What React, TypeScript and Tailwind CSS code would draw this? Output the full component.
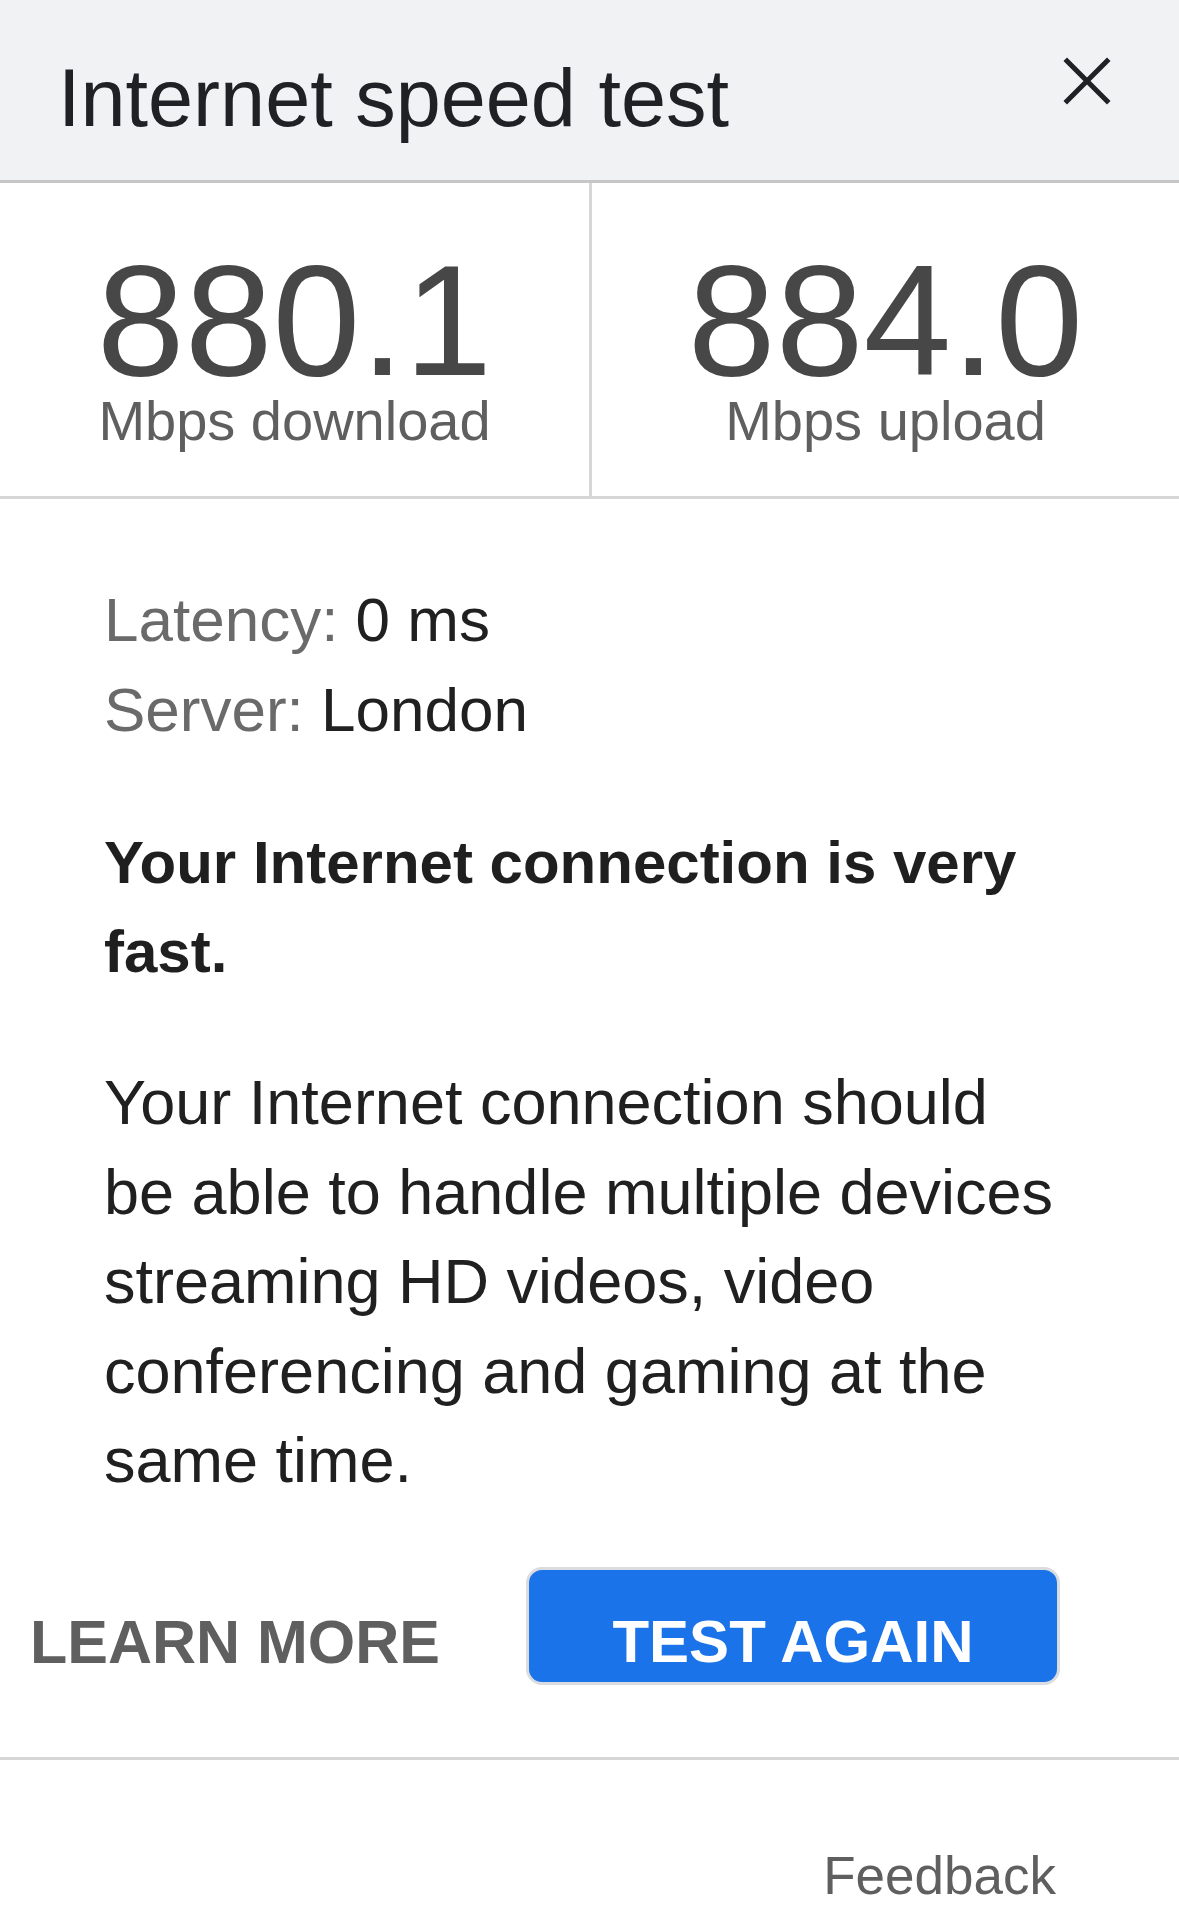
const font = { fontFamily: '"Liberation Sans", Arial, sans-serif' };

function CloseIcon() {
  return (
    <svg width="48" height="48" viewBox="0 0 48 48" className="mt-[9px] shrink-0">
      <path d="M4 4 L44 44 M44 4 L4 44" stroke="#202124" strokeWidth="5" strokeLinecap="square" />
    </svg>
  );
}

function Stat({ value, label, divider }: { value: string; label: string; divider?: boolean }) {
  return (
    <div className={`flex flex-col items-center pt-[64px] ${divider ? 'border-r-[3px] border-[#d6d6d6]' : ''}`}>
      <span className="text-[158px] leading-[146px] text-[#474747]">{value}</span>
      <span className="text-[56px] leading-[56px] text-[#5f5f5f]">{label}</span>
    </div>
  );
}

export default function App() {
  return (
    <div className="w-[1179px] min-h-[1932px] bg-white" style={font}>
      <header className="flex h-[183px] items-start justify-between border-b-[3px] border-[#c6c6c6] bg-[#f1f2f4] pt-[48px] pl-[58px] pr-[68px]">
        <h1 className="text-[81px] leading-[100px] text-[#202124]">Internet speed test</h1>
        <CloseIcon />
      </header>

      <section className="grid h-[316px] grid-cols-[592px_1fr] border-b-[3px] border-[#d6d6d6]">
        <Stat value="880.1" label="Mbps download" divider />
        <Stat value="884.0" label="Mbps upload" />
      </section>

      <section className="w-[1064px] pl-[104px] pt-[76px]">
        <div className="text-[62px] leading-[90px]">
          <p>
            <span className="text-[#6a6a6a]">Latency: </span>
            <span className="text-[#202020]">0 ms</span>
          </p>
          <p>
            <span className="text-[#6a6a6a]">Server: </span>
            <span className="text-[#202020]">London</span>
          </p>
        </div>
        <p className="mt-[63px] text-[60px] font-bold leading-[89px] text-[#1f1f1f]">
          Your Internet connection is very fast.
        </p>
        <p className="mt-[62px] text-[63px] leading-[89.5px] text-[#202020]">
          Your Internet connection should be able to handle multiple devices streaming HD videos, video
          conferencing and gaming at the same time.
        </p>
      </section>

      <div className="mt-[61px] flex items-start justify-between pl-[30px] pr-[119px]">
        <span className="mt-[45px] text-[61px] font-bold leading-[60px] text-[#5f5f5f]">LEARN MORE</span>
        <button className="flex h-[118px] w-[534px] justify-center rounded-[16px] border-[3px] border-[#dadce0] bg-[#1a73e8] pt-[42px]">
          <span className="text-[60px] font-bold leading-[60px] text-white">TEST AGAIN</span>
        </button>
      </div>

      <div className="mt-[72px] border-t-[3px] border-[#d6d6d6]" />

      <div className="flex justify-end pr-[123px] pt-[86px]">
        <span className="text-[53px] leading-[60px] text-[#5f5f5f]">Feedback</span>
      </div>
    </div>
  );
}
